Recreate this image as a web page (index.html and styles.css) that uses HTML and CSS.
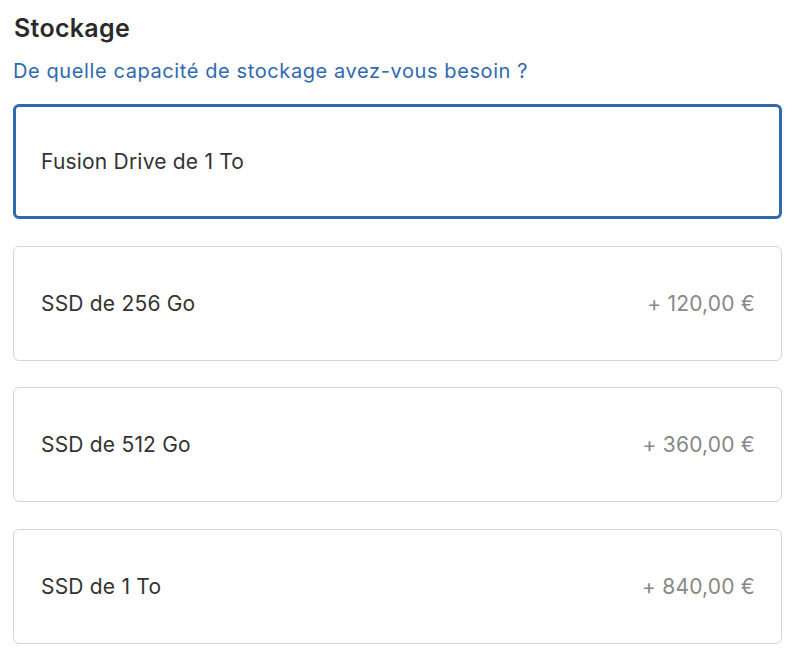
FILE: index.html
```html
<!DOCTYPE html>
<html lang="fr">
<head>
    <meta charset="UTF-8">
    <meta name="viewport" content="width=device-width, initial-scale=1.0">
    <title>Stockage</title>
    <link rel="stylesheet" href="styles.css">
</head>
<body>
<div class="storage">
    <h2 class="storage-title">Stockage</h2>
    <p class="storage-question">De quelle capacité de stockage avez-vous besoin ?</p>
    <div class="options">
        <div class="option selected">
            <span class="option-name">Fusion Drive de 1 To</span>
        </div>
        <div class="option">
            <span class="option-name">SSD de 256 Go</span>
            <span class="option-price">+ 120,00 €</span>
        </div>
        <div class="option">
            <span class="option-name">SSD de 512 Go</span>
            <span class="option-price">+ 360,00 €</span>
        </div>
        <div class="option">
            <span class="option-name">SSD de 1 To</span>
            <span class="option-price">+ 840,00 €</span>
        </div>
    </div>
</div>
</body>
</html>
```

FILE: styles.css
```css
body {
    font-family: Inter, "Liberation Sans", sans-serif;
    background-color: #fff;
    margin: 0;
    padding: 0;
    color: #333;
}

.storage {
    padding: 12px 18px 0 13px;
}

.storage-title {
    margin: 0 0 0 1px;
    font-size: 25px;
    font-weight: 600;
    line-height: 32px;
    letter-spacing: 0.3px;
    color: #2a2a2a;
}

.storage-question {
    margin: 14px 0 0 0;
    font-size: 20px;
    line-height: 26px;
    letter-spacing: 0.6px;
    color: #3169b0;
}

.options {
    display: flex;
    flex-direction: column;
    gap: 26.5px;
    margin-top: 20px;
}

.option {
    display: flex;
    justify-content: space-between;
    align-items: center;
    height: 115px;
    box-sizing: border-box;
    padding: 0 26px 0 27px;
    border: 1.5px solid #d4d4d4;
    border-radius: 6px;
    font-size: 21px;
    letter-spacing: 0.2px;
}

.option.selected {
    border: 3px solid #3169b0;
    padding-left: 25px;
}

.option-name {
    color: #333;
}

.option-price {
    color: #888;
}
```
